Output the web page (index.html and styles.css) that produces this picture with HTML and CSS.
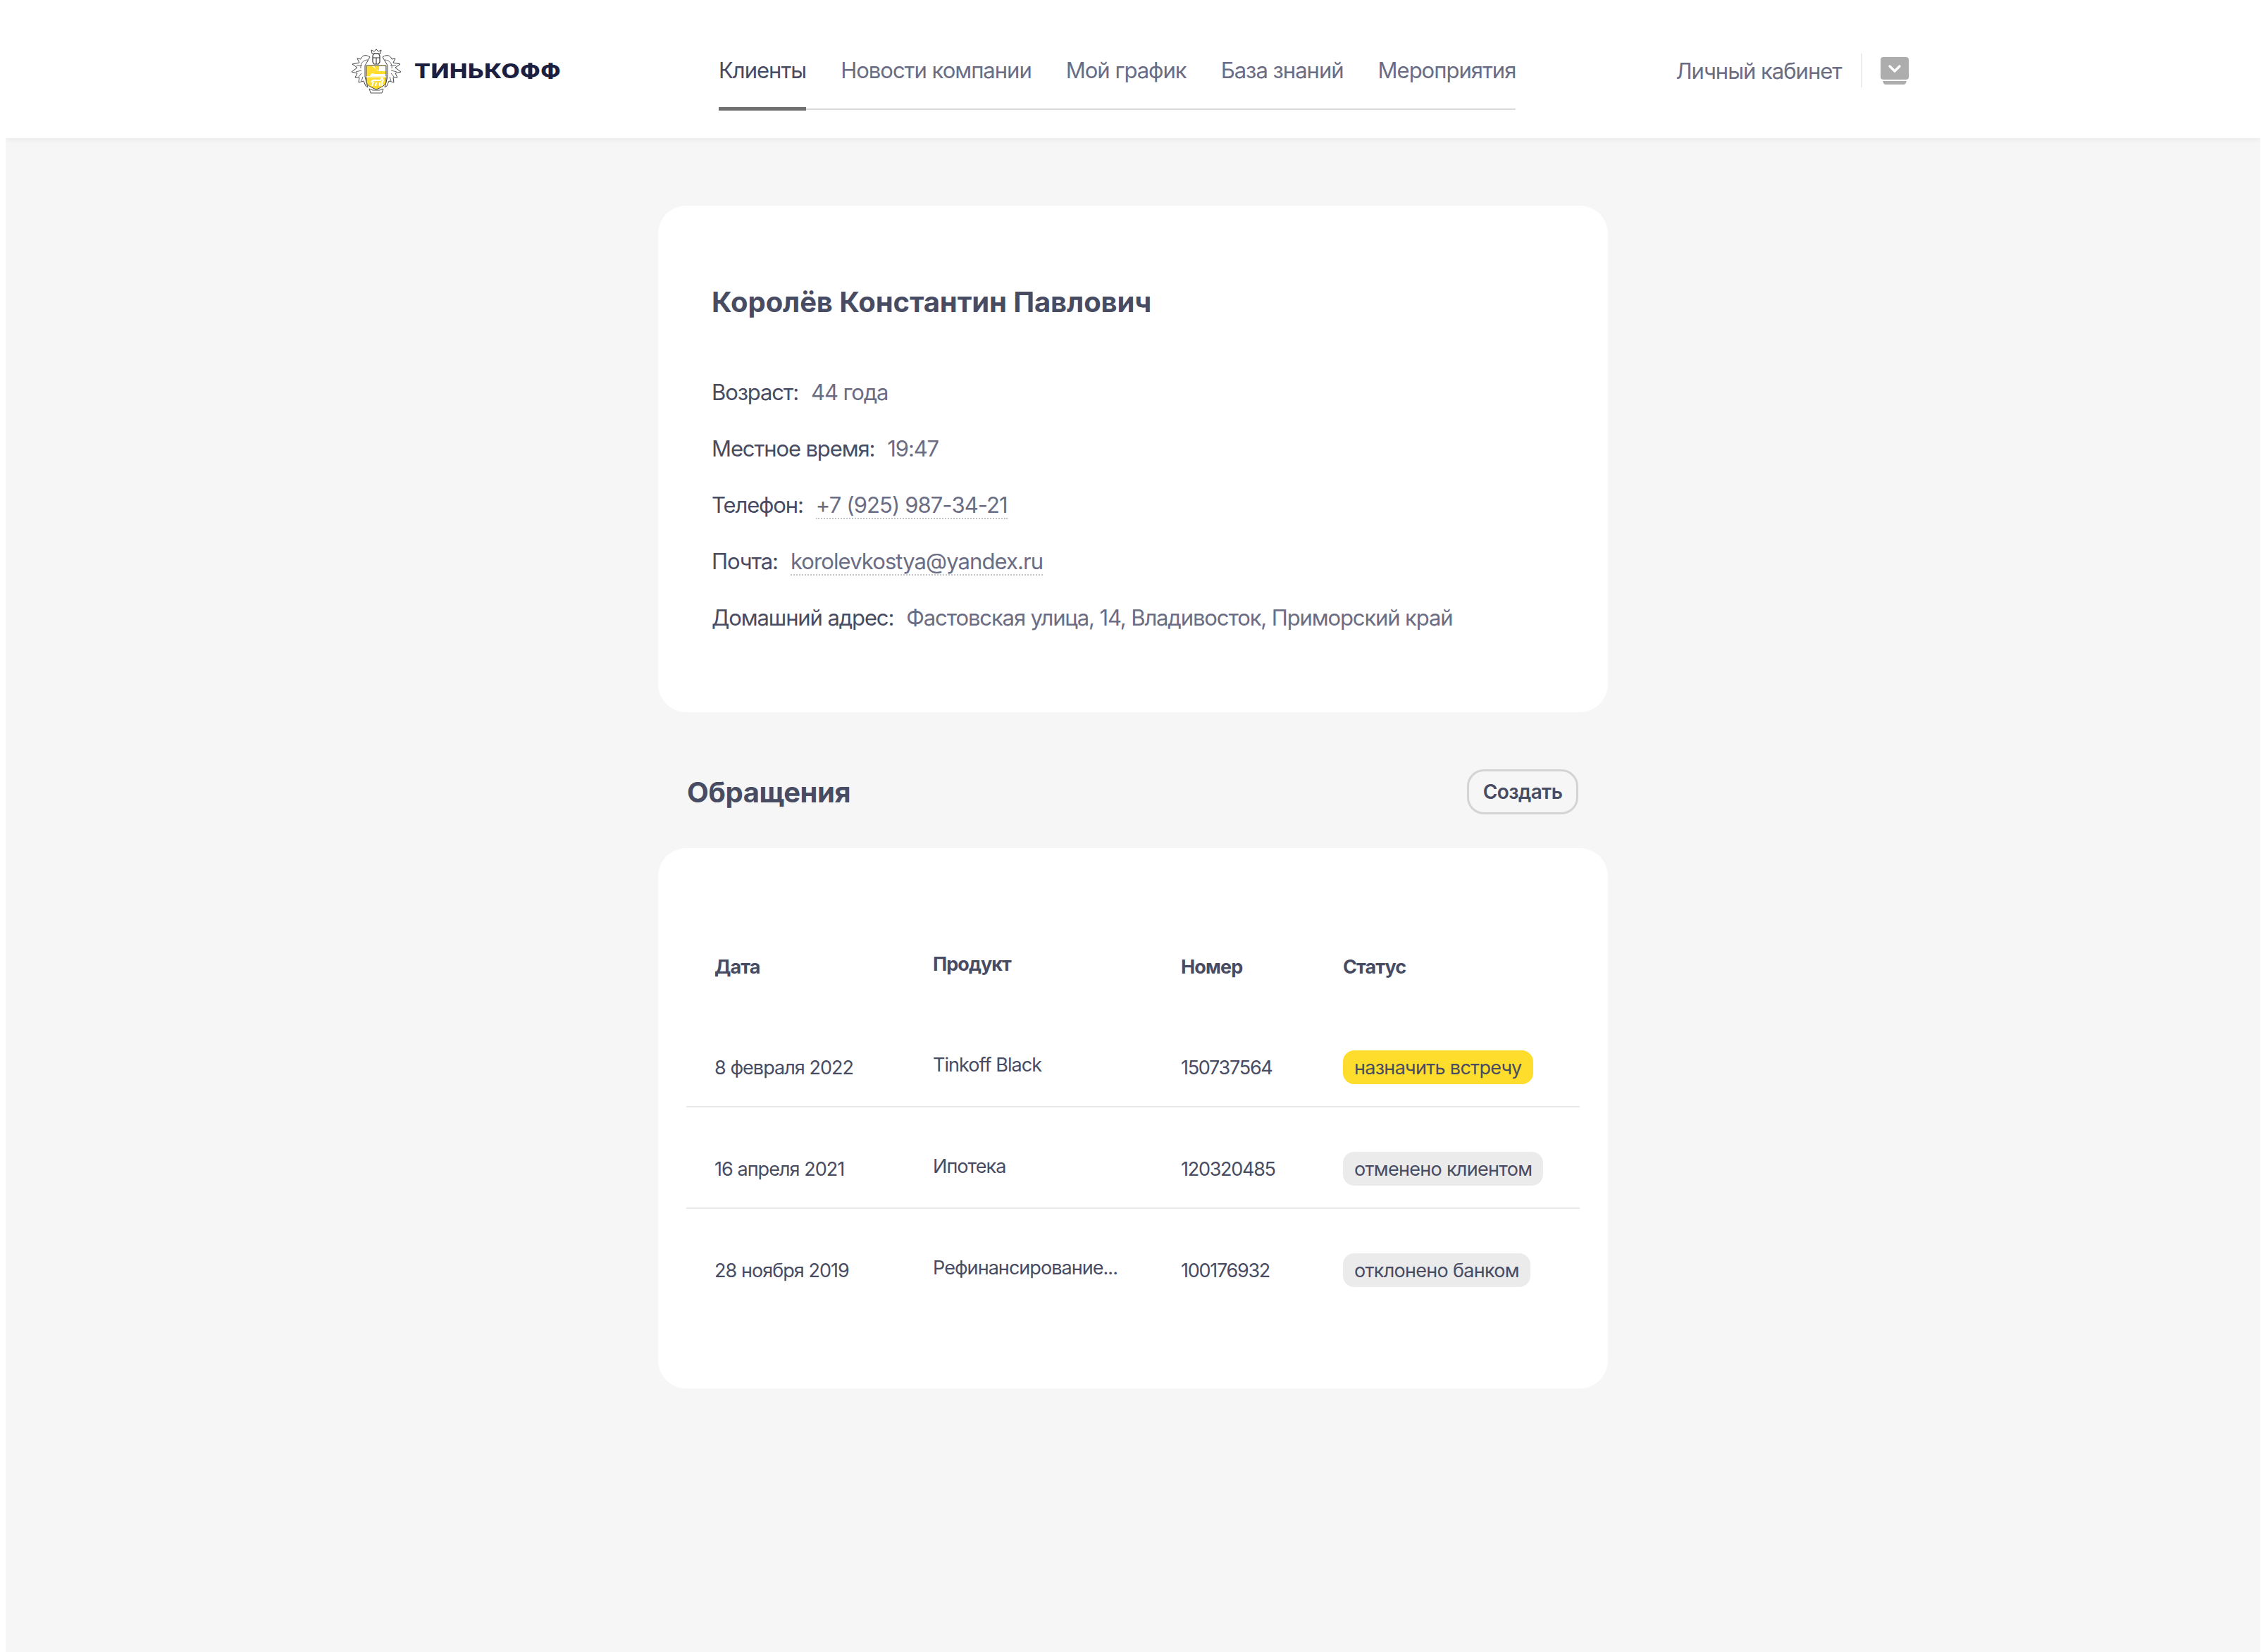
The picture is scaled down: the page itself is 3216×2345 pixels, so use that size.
FILE: index.html
```html
<!DOCTYPE html>
<html lang="ru">
<head>
    <meta charset="UTF-8">
    <title>Клиенты - Тинькофф</title>
    <link rel="stylesheet" href="styles.css">
</head>
<body>
    <div class="page">
        <header class="header">
            <a class="logo" href="#">
                <svg class="logo-crest" viewBox="0 0 72 64" width="72" height="64">
                    <!-- crown -->
                    <path d="M30 7 L29 2 L33 4 L36 1 L39 4 L43 2 L42 7 Z" fill="#fff" stroke="#444" stroke-width="1"/>
                    <!-- leaves left -->
                    <path d="M27 12 C20 7 15 11 14 15 L9 14 L12 20 L2 22 L9 27 L1 33 L9 35 L6 41 L12 41 L11 48 L18 46 L21 53 L24 55 L20 40 L20 24 Z" fill="#fff" stroke="#444" stroke-width="1"/>
                    <path d="M24 16 C17 16 13 22 14 28 M16 24 L8 24 M15 31 L7 33 M15 35 L11 40 M17 40 L15 46" fill="none" stroke="#666" stroke-width="1"/>
                    <!-- leaves right -->
                    <path d="M45 12 C52 7 57 11 58 15 L63 14 L60 20 L70 22 L63 27 L71 33 L63 35 L66 41 L60 41 L61 48 L54 46 L51 53 L48 55 L52 40 L52 24 Z" fill="#fff" stroke="#444" stroke-width="1"/>
                    <path d="M48 16 C55 16 59 22 58 28 M56 24 L64 24 M57 31 L65 33 M57 35 L61 40 M55 40 L57 46" fill="none" stroke="#666" stroke-width="1"/>
                    <!-- helmet -->
                    <path d="M31 19 L31 11 C31 8 33 7 36 7 C39 7 41 8 41 11 L41 19 L39 22 L33 22 Z" fill="#fff" stroke="#333" stroke-width="1.2"/>
                    <path d="M31 13 H41 M36 13 V22" stroke="#333" stroke-width="1.1"/>
                    <!-- shield -->
                    <path d="M22 24 H50 V47 C50 52 43 55 36 58 C29 55 22 52 22 47 Z" fill="#ffdd2d" stroke="#444" stroke-width="1"/>
                    <path d="M22 40 H50" stroke="#fff" stroke-width="1.4"/>
                    <path d="M30 25 L33 25 L38 32 L49 32 L49 25 L40 25 L40 32 M27 38 L30 35 L34 36 L49 36 L49 39 L27 39 Z" fill="#fff"/>
                    <path d="M29 48 C30 44 33 45 36 45 L42 45 L44 42 L46 45 L44 48 L44 53 M32 47 L30 53 M36 48 L35 53 M41 48 L41 53" fill="none" stroke="#fff" stroke-width="2.2"/>
                    <!-- ribbon -->
                    <path d="M26 57 L31 59 L41 59 L46 57 L44 63 L28 63 Z" fill="#fff" stroke="#555" stroke-width="1"/>
                </svg>
                <span class="logo-text">ТИНЬКОФФ</span>
            </a>
            <nav class="nav">
                <a class="nav-item active" href="#">Клиенты</a>
                <a class="nav-item" href="#">Новости компании</a>
                <a class="nav-item" href="#">Мой график</a>
                <a class="nav-item" href="#">База знаний</a>
                <a class="nav-item" href="#">Мероприятия</a>
            </nav>
            <div class="account">
                <a class="account-link" href="#">Личный кабинет</a>
                <span class="account-divider"></span>
                <svg class="account-icon" viewBox="0 0 40 39" width="40" height="39">
                    <rect x="0" y="0" width="40" height="32" rx="4" fill="#adadad"/>
                    <path d="M3 34 H37 C36 37 35 39 33 39 H7 C5 39 4 37 3 34 Z" fill="#adadad"/>
                    <path d="M13 13 L20 20 L27 13" fill="none" stroke="#fff" stroke-width="3.4" stroke-linecap="round" stroke-linejoin="round"/>
                </svg>
            </div>
        </header>

        <main class="content">
            <section class="card client">
                <h1 class="client-name">Королёв Константин Павлович</h1>
                <div class="client-row"><span class="client-label">Возраст:</span><span class="client-value">44 года</span></div>
                <div class="client-row"><span class="client-label">Местное время:</span><span class="client-value">19:47</span></div>
                <div class="client-row"><span class="client-label">Телефон:</span><a class="client-value client-link" href="#">+7 (925) 987-34-21</a></div>
                <div class="client-row"><span class="client-label">Почта:</span><a class="client-value client-link" href="#">korolevkostya@yandex.ru</a></div>
                <div class="client-row"><span class="client-label">Домашний адрес:</span><span class="client-value">Фастовская улица, 14, Владивосток, Приморский край</span></div>
            </section>

            <div class="section-head">
                <h2 class="section-title">Обращения</h2>
                <button class="create-btn">Создать</button>
            </div>

            <section class="card requests">
                <div class="table-row table-head">
                    <div class="col-date">Дата</div>
                    <div class="col-product">Продукт</div>
                    <div class="col-number">Номер</div>
                    <div class="col-status">Статус</div>
                </div>
                <div class="table-row table-line">
                    <div class="col-date">8 февраля 2022</div>
                    <div class="col-product">Tinkoff Black</div>
                    <div class="col-number">150737564</div>
                    <div class="col-status"><span class="badge badge-yellow">назначить встречу</span></div>
                </div>
                <div class="table-row table-line">
                    <div class="col-date">16 апреля 2021</div>
                    <div class="col-product">Ипотека</div>
                    <div class="col-number">120320485</div>
                    <div class="col-status"><span class="badge">отменено клиентом</span></div>
                </div>
                <div class="table-row">
                    <div class="col-date">28 ноября 2019</div>
                    <div class="col-product">Рефинансирование...</div>
                    <div class="col-number">100176932</div>
                    <div class="col-status"><span class="badge">отклонено банком</span></div>
                </div>
            </section>
        </main>
    </div>
</body>
</html>
```

FILE: styles.css
```css
* {
    margin: 0;
    padding: 0;
    box-sizing: border-box;
}

body {
    font-family: 'Inter', 'Noto Sans', sans-serif;
    background: #ffffff;
    color: #484c63;
    padding: 0 8px;
}

a {
    color: inherit;
    text-decoration: none;
}

.page {
    background: #f6f6f6;
    height: 2345px;
    overflow: hidden;
}

/* header */
.header {
    height: 196px;
    background: #ffffff;
    box-shadow: 0 2px 8px rgba(0, 0, 0, 0.06);
    display: flex;
    align-items: center;
    padding-left: 490px;
}

.logo {
    display: flex;
    align-items: center;
    gap: 18px;
    width: 522px;
    margin-top: 6px;
}

.logo-text {
    display: inline-block;
    font-size: 28px;
    font-weight: 800;
    color: #1c2040;
    letter-spacing: 0.5px;
    transform: scaleX(1.21);
    transform-origin: left center;
}

.nav {
    display: flex;
    gap: 49px;
    border-bottom: 2px solid #d9d9d9;
    height: 102px;
    margin-top: 14px;
    align-items: flex-start;
}

.nav-item {
    font-size: 31px;
    line-height: 42px;
    padding-top: 25px;
    height: 103px;
    color: #6a6d84;
    letter-spacing: -1px;
}

.nav-item.active {
    color: #484c63;
    border-bottom: 5px solid #707070;
}

.account {
    display: flex;
    align-items: center;
    margin-left: 227px;
    margin-top: 4px;
}

.account-link {
    font-size: 31px;
    color: #6a6d84;
    letter-spacing: -1px;
}

.account-divider {
    width: 2px;
    height: 48px;
    background: #ececec;
    margin: 0 26px 0 27px;
}

.account-icon {
    display: block;
}

/* main column */
.content {
    width: 1348px;
    margin: 96px auto 0;
}

.card {
    background: #ffffff;
    border-radius: 40px;
}

.client {
    height: 719px;
    padding: 113px 76px 0;
}

.client-name {
    font-size: 40px;
    line-height: 48px;
    font-weight: 700;
    color: #484c63;
    letter-spacing: -0.1px;
    margin-bottom: 82px;
}

.client-row {
    display: flex;
    gap: 18px;
    font-size: 31px;
    line-height: 44px;
    margin-bottom: 36px;
    letter-spacing: -1.12px;
}

.client-value {
    color: #6a6d84;
}

.client-link {
    border-bottom: 2px dotted #c4c5cf;
    height: 42px;
    letter-spacing: -0.9px;
}

.section-head {
    padding: 81px 42px 48px 41px;
    display: flex;
    align-items: center;
    justify-content: space-between;
}

.section-title {
    font-size: 40px;
    font-weight: 700;
    color: #484c63;
    letter-spacing: -0.4px;
}

.create-btn {
    width: 158px;
    height: 64px;
    border: 3px solid #d4d4d4;
    border-radius: 24px;
    background: transparent;
    font-family: inherit;
    font-size: 28px;
    font-weight: 600;
    color: #484c63;
    letter-spacing: -0.6px;
}

/* table */
.requests {
    height: 767px;
    padding: 120px 40px 0;
}

.table-row {
    display: grid;
    grid-template-columns: 310px 352px 230px 1fr;
    padding: 62px 0 32px 40px;
    align-items: center;
    font-size: 27px;
    letter-spacing: -0.95px;
    height: 144px;
}

.table-head {
    height: 104px;
    padding: 0 0 8px 40px;
    font-weight: 700;
}

.table-line {
    border-bottom: 2px solid #e9e9e9;
    padding-bottom: 30px;
}

.col-product {
    margin-top: -8px;
}

.col-number {
    letter-spacing: -1.28px;
}

.table-head .col-number {
    letter-spacing: -0.9px;
}

.badge {
    display: block;
    width: fit-content;
    height: 48px;
    line-height: 50px;
    padding: 0 16px;
    border-radius: 16px;
    background: #ebebeb;
    letter-spacing: -0.7px;
}

.badge-yellow {
    background: #ffdd2d;
}
```
